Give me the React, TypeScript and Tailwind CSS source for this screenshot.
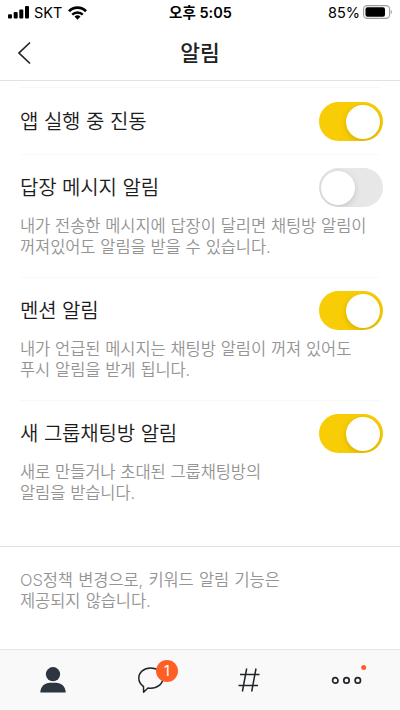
import clsx from "clsx";
import { useState } from "react";

const settings = [
    { id: "vibrate", label: "앱 실행 중 진동", lines: [], on: true, size: "h-[67px]" },
    {
        id: "reply",
        label: "답장 메시지 알림",
        lines: ["내가 전송한 메시지에 답장이 달리면 채팅방 알림이", "꺼져있어도 알림을 받을 수 있습니다."],
        on: false,
        size: "h-[123px]",
    },
    {
        id: "mention",
        label: "멘션 알림",
        lines: ["내가 언급된 메시지는 채팅방 알림이 꺼져 있어도", "푸시 알림을 받게 됩니다."],
        on: true,
        size: "h-[123px]",
    },
    {
        id: "group",
        label: "새 그룹채팅방 알림",
        lines: ["새로 만들거나 초대된 그룹채팅방의", "알림을 받습니다."],
        on: true,
        size: "h-[146px]",
    },
];

function StatusBar() {
    return (
        <div className="grid h-[25px] shrink-0 grid-cols-3 items-center pr-[7px] pl-2 text-[14.5px] text-black">
            <div className="flex items-center">
                <svg width="21" height="13" viewBox="0 0 21 13" fill="currentColor">
                    <rect x="0" y="8.3" width="4" height="4.2" rx="1" />
                    <rect x="5.7" y="6" width="4" height="6.5" rx="1" />
                    <rect x="11.3" y="3.4" width="4" height="9.1" rx="1" />
                    <rect x="17" y="0" width="4" height="12.5" rx="1" />
                </svg>
                <span className="ml-[5px]">SKT</span>
                <svg className="ml-[6px]" width="19" height="14" viewBox="0 0 19 14" fill="none" stroke="currentColor">
                    <path d="M1 5.2a12 12 0 0 1 17 0" strokeWidth="2.7" />
                    <path d="M4.2 8.7a7.5 7.5 0 0 1 10.6 0" strokeWidth="2.4" />
                    <path d="M9.5 13.8l-3-3.2a4.3 4.3 0 0 1 6 0z" fill="currentColor" stroke="none" />
                </svg>
            </div>
            <div className="text-center font-semibold whitespace-nowrap">오후 5:05</div>
            <div className="flex items-center justify-end">
                <span>85%</span>
                <svg className="mr-px mb-px ml-[3px]" width="29" height="14" viewBox="0 0 29 14">
                    <rect x="0.6" y="0.6" width="26" height="12.8" rx="3.6" fill="none" stroke="#9b9b9b" strokeWidth="1.1" />
                    <rect x="2.5" y="2.2" width="19.5" height="9.6" rx="2" fill="#000" />
                    <path d="M27.8 5c1.4.6 1.4 3.4 0 4z" fill="#9b9b9b" />
                </svg>
            </div>
        </div>
    );
}

function Toggle({ on, onClick }: { on: boolean; onClick: () => void }) {
    return (
        <button
            onClick={onClick}
            className={clsx(
                "flex h-[39px] w-16 shrink-0 items-center overflow-hidden rounded-full",
                on ? "justify-end bg-[#f9cd05] pr-[3px]" : "justify-start bg-[#e7e7e7] pl-[2px]"
            )}
        >
            <span className="size-[34px] rounded-full bg-white shadow-[0_2px_6px_rgba(0,0,0,0.15)]" />
        </button>
    );
}

function TabBar() {
    return (
        <nav className="flex h-[61px] shrink-0 border-t border-[#e6e6e6] bg-[#f9f9f9] text-[#2d3540]">
            <div className="flex w-[106px] justify-center pt-[17px]">
                <svg width="26" height="26" viewBox="0 0 26 26" fill="currentColor">
                    <circle cx="13" cy="7.2" r="7.1" />
                    <path d="M.3 25.6C.3 19.5 5 15.8 10 15.8h6c5 0 9.7 3.7 9.7 9.8z" />
                </svg>
            </div>
            <div className="flex w-[90px] justify-center pt-[17px]">
                <div className="relative h-[27px] w-[26px]">
                    <svg width="26" height="27" viewBox="0 0 26 27" fill="none" stroke="#20252b" strokeWidth="1.5" strokeLinejoin="round">
                        <path d="M12.6.9C5.9.9.8 5.3.8 11.1c0 3.6 1.7 6.5 4.7 8.4l.1 5.7 4.4-4.2c.9.2 1.7.2 2.6.2 6.7 0 12.4-4.3 12.4-10.1S19.3.9 12.6.9z" />
                    </svg>
                    <span className="absolute -top-[7px] left-[18px] flex size-[21.5px] items-center justify-center rounded-full bg-[#ff5f27] text-[14px] text-white">
                        1
                    </span>
                </div>
            </div>
            <div className="flex w-[105px] justify-center pt-[18px]">
                <svg width="22" height="24" viewBox="0 0 22 24" fill="none" stroke="#20252b" strokeWidth="1.5">
                    <path d="M8.7.5 4.4 23.5M18 .5l-4.3 23M2 6.5h19.5M.5 17.4H20" />
                </svg>
            </div>
            <div className="flex w-[96px] justify-center pt-[15px]">
                <svg width="36" height="24" viewBox="0 0 36 24" fill="none" stroke="#20252b" strokeWidth="1.7">
                    <circle cx="4.3" cy="15.4" r="2.7" />
                    <circle cx="15.5" cy="15.4" r="2.7" />
                    <circle cx="26.8" cy="15.4" r="2.7" />
                    <circle cx="32.7" cy="2.5" r="2.5" fill="#ff5f27" stroke="none" />
                </svg>
            </div>
        </nav>
    );
}

export default function App() {
    const [enabled, setEnabled] = useState<Record<string, boolean>>(
        Object.fromEntries(settings.map((s) => [s.id, s.on]))
    );

    return (
        <div className="flex h-[710px] w-[400px] flex-col overflow-hidden bg-white font-['Inter','Noto_Sans_CJK_KR',sans-serif]">
            <StatusBar />

            <header className="grid h-14 shrink-0 grid-cols-3 items-center border-b border-[#e2e2e2] text-[#222]">
                <svg className="ml-[17px]" width="14" height="24" viewBox="0 0 14 24" fill="none" stroke="currentColor" strokeWidth="1.7">
                    <path d="M13 1.5 2 12l11 10.5" />
                </svg>
                <h1 className="pt-px text-center text-[21.5px] font-medium">알림</h1>
            </header>

            <main className="flex-1">
                <div className="pt-1.5">
                    {settings.map((s) => (
                        <section key={s.id} className={clsx("flex flex-col pr-[17px] pl-5", s.size)}>
                            <div className="mr-[3px] h-px shrink-0 bg-[#f8f8f8]" />
                            <div className={clsx("flex shrink-0 items-center justify-between", s.lines.length ? "mt-[13px]" : "mt-3.5")}>
                                <h2 className="pt-px text-[20px] leading-[37px] font-[350] tracking-[-0.2px] text-[#1c1c1c] [word-spacing:0.3px]">{s.label}</h2>
                                <Toggle
                                    on={enabled[s.id]}
                                    onClick={() => setEnabled({ ...enabled, [s.id]: !enabled[s.id] })}
                                />
                            </div>
                            <div className="mt-[9px] text-[16.5px] leading-[20.5px] font-[350] tracking-[-0.1px] whitespace-nowrap text-[#949494] [word-spacing:0.4px]">
                                {s.lines.map((line) => (
                                    <p key={line}>{line}</p>
                                ))}
                            </div>
                        </section>
                    ))}
                </div>

                <div className="border-t border-[#e2e2e2] px-5 pt-[23px] text-[16.5px] leading-[20.5px] font-[350] tracking-[-0.1px] text-[#949494] [word-spacing:0.8px]">
                    <p>OS정책 변경으로, 키워드 알림 기능은</p>
                    <p>제공되지 않습니다.</p>
                </div>
            </main>

            <TabBar />
        </div>
    );
}
